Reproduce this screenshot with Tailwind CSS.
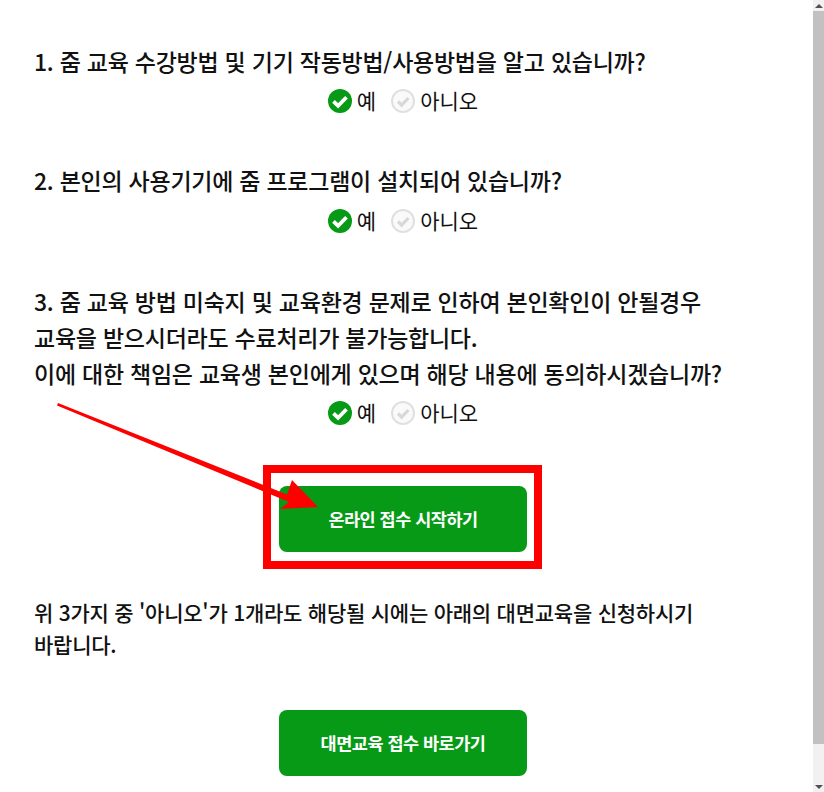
<!DOCTYPE html>
<html lang="ko">
<head>
<meta charset="utf-8">
<script src="https://cdn.jsdelivr.net/npm/@tailwindcss/browser@4"></script>
</head>
<body class="bg-white overflow-hidden">
<div class="relative flex w-[824px] h-[792px] font-['Noto_Sans_CJK_KR','Noto_Sans',sans-serif] text-[#111]">
  <main class="w-[813px] pl-[34px] pr-[84px] pt-[43px]">
    <p class="text-[23px] leading-9 font-medium tracking-[-0.25px] whitespace-nowrap">1. 줌 교육 수강방법 및 기기 작동방법/사용방법을 알고 있습니까?</p>
    <div class="flex justify-center items-center h-10 mt-[2px] ml-[43px] text-[21px]">
      <svg class="w-6 h-6 mr-[5px]" viewBox="0 0 24 24"><circle cx="12" cy="12" r="12" fill="#069a17"/><path d="M5.5 12.3l4.6 4.6L18.5 8.2" fill="none" stroke="#fff" stroke-width="3.8"/></svg><span>예</span>
      <svg class="w-6 h-6 ml-[15px] mr-[5px]" viewBox="0 0 24 24"><circle cx="12" cy="12" r="11" fill="#fafafa" stroke="#e0e0e0" stroke-width="2"/><path d="M7 12.5l3.6 3.6L17.5 9" fill="none" stroke="#d8d8d8" stroke-width="3.2"/></svg><span>아니오</span>
    </div>
    <p class="mt-[41px] text-[23px] leading-9 font-medium tracking-[-0.25px] whitespace-nowrap">2. 본인의 사용기기에 줌 프로그램이 설치되어 있습니까?</p>
    <div class="flex justify-center items-center h-10 mt-[3px] ml-[43px] text-[21px]">
      <svg class="w-6 h-6 mr-[5px]" viewBox="0 0 24 24"><circle cx="12" cy="12" r="12" fill="#069a17"/><path d="M5.5 12.3l4.6 4.6L18.5 8.2" fill="none" stroke="#fff" stroke-width="3.8"/></svg><span>예</span>
      <svg class="w-6 h-6 ml-[15px] mr-[5px]" viewBox="0 0 24 24"><circle cx="12" cy="12" r="11" fill="#fafafa" stroke="#e0e0e0" stroke-width="2"/><path d="M7 12.5l3.6 3.6L17.5 9" fill="none" stroke="#d8d8d8" stroke-width="3.2"/></svg><span>아니오</span>
    </div>
    <p class="mt-[42px] text-[23px] leading-9 font-medium tracking-[-0.25px] whitespace-nowrap">3. 줌 교육 방법 미숙지 및 교육환경 문제로 인하여 본인확인이 안될경우<br>교육을 받으시더라도 수료처리가 불가능합니다.<br>이에 대한 책임은 교육생 본인에게 있으며 해당 내용에 동의하시겠습니까?</p>
    <div class="flex justify-center items-center h-10 mt-[2px] ml-[43px] text-[21px]">
      <svg class="w-6 h-6 mr-[5px]" viewBox="0 0 24 24"><circle cx="12" cy="12" r="12" fill="#069a17"/><path d="M5.5 12.3l4.6 4.6L18.5 8.2" fill="none" stroke="#fff" stroke-width="3.8"/></svg><span>예</span>
      <svg class="w-6 h-6 ml-[15px] mr-[5px]" viewBox="0 0 24 24"><circle cx="12" cy="12" r="11" fill="#fafafa" stroke="#e0e0e0" stroke-width="2"/><path d="M7 12.5l3.6 3.6L17.5 9" fill="none" stroke="#d8d8d8" stroke-width="3.2"/></svg><span>아니오</span>
    </div>
    <a class="flex items-center justify-center w-[248px] h-[66px] mt-[53px] ml-[245px] rounded-lg bg-[#069a17] text-white text-[17.5px] font-bold tracking-[-0.5px]">온라인 접수 시작하기</a>
    <p class="mt-[44px] text-[21px] leading-8 font-medium tracking-[-0.23px] whitespace-nowrap">위 3가지 중 '아니오'가 1개라도 해당될 시에는 아래의 대면교육을 신청하시기<br>바랍니다.</p>
    <a class="flex items-center justify-center w-[248px] h-[66px] mt-[50px] ml-[245px] rounded-lg bg-[#069a17] text-white text-[17.5px] font-bold tracking-[-0.5px]">대면교육 접수 바로가기</a>
  </main>
  <aside class="w-[11px] h-full flex flex-col items-center bg-[#f1f1f1]">
    <div class="h-[11px] w-full flex items-center justify-center"><div class="w-0 h-0 border-x-[4px] border-x-transparent border-b-[4px] border-b-[#505050]"></div></div>
    <div class="h-[733px] w-full bg-[#c1c1c1]"></div>
    <div class="flex-1"></div>
    <div class="h-[11px] w-full flex items-center justify-center"><div class="w-0 h-0 border-x-[4px] border-x-transparent border-t-[4px] border-t-[#505050]"></div></div>
  </aside>
  <div class="absolute left-[263px] top-[465px] w-[279px] h-[104px] border-[8px] border-[#ff0000]"></div>
  <svg class="absolute left-0 top-0 pointer-events-none" width="824" height="792" viewBox="0 0 824 792"><path d="M58 403L287 494.5L292 480L318 507L280 509L289 502L57 405.5Z" fill="#f00"/></svg>
</div>
</body>
</html>
